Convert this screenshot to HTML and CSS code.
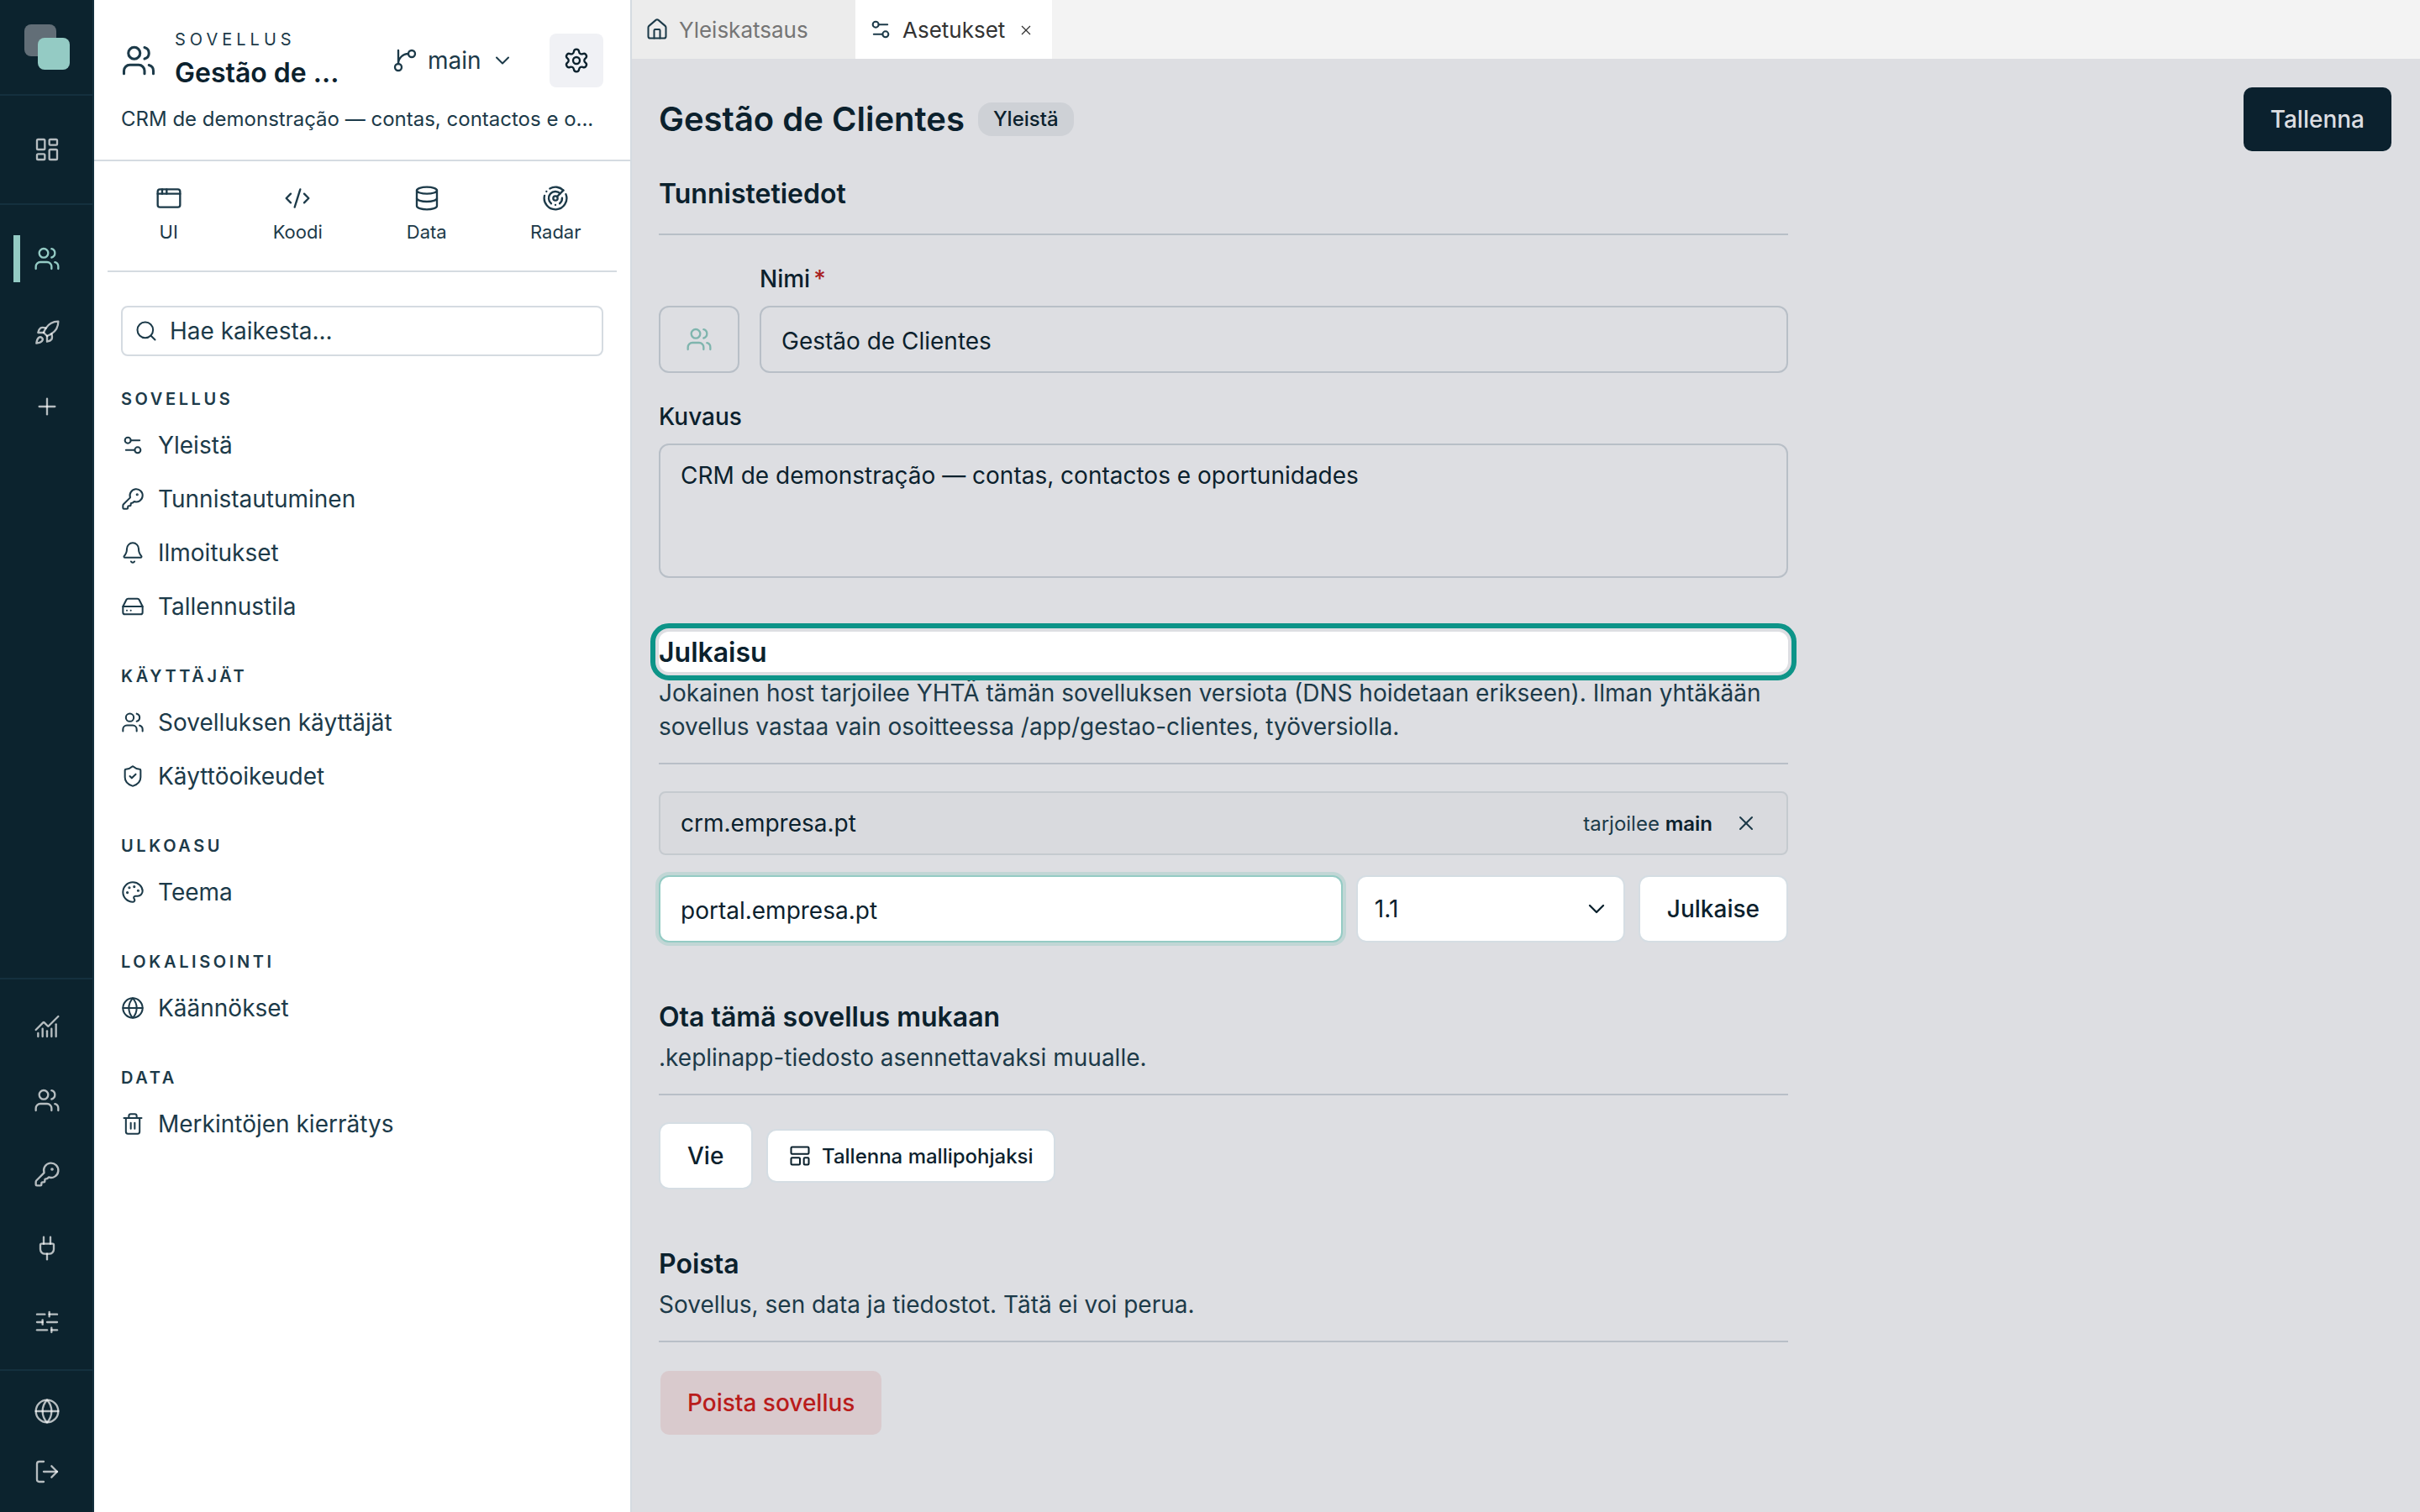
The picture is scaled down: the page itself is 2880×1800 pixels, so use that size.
FILE: index.html
```html
<!DOCTYPE html>
<html lang="fi">
<head>
    <meta charset="UTF-8">
    <meta name="viewport" content="width=device-width, initial-scale=1.0">
    <title>Gestão de Clientes - Asetukset</title>
    <link rel="stylesheet" href="styles.css">
</head>
<body>
    <!-- Icon sprite -->
    <svg class="sprite" xmlns="http://www.w3.org/2000/svg">
        <symbol id="i-dashboard" viewBox="0 0 24 24"><rect x="3" y="3" width="7" height="9" rx="1"/><rect x="14" y="3" width="7" height="5" rx="1"/><rect x="14" y="12" width="7" height="9" rx="1"/><rect x="3" y="16" width="7" height="5" rx="1"/></symbol>
        <symbol id="i-users" viewBox="0 0 24 24"><path d="M16 21v-2a4 4 0 0 0-4-4H6a4 4 0 0 0-4 4v2"/><path d="M16 3.128a4 4 0 0 1 0 7.744"/><path d="M22 21v-2a4 4 0 0 0-3-3.87"/><circle cx="9" cy="7" r="4"/></symbol>
        <symbol id="i-rocket" viewBox="0 0 24 24"><path d="M4.5 16.5c-1.5 1.26-2 5-2 5s3.74-.5 5-2c.71-.84.7-2.13-.09-2.91a2.18 2.18 0 0 0-2.91-.09z"/><path d="m12 15-3-3a22 22 0 0 1 2-3.95A12.88 12.88 0 0 1 22 2c0 2.72-.78 7.5-6 11a22.35 22.35 0 0 1-4 2z"/><path d="M9 12H4s.55-3.03 2-4c1.62-1.08 5 0 5 0"/><path d="M12 15v5s3.03-.55 4-2c1.08-1.62 0-5 0-5"/></symbol>
        <symbol id="i-plus" viewBox="0 0 24 24"><path d="M5 12h14"/><path d="M12 5v14"/></symbol>
        <symbol id="i-chart" viewBox="0 0 24 24"><path d="M12 16v5"/><path d="M16 14v7"/><path d="M20 10v11"/><path d="m22 3-8.646 8.646a.5.5 0 0 1-.708 0L9.354 8.354a.5.5 0 0 0-.707 0L2 15"/><path d="M4 18v3"/><path d="M8 14v7"/></symbol>
        <symbol id="i-key" viewBox="0 0 24 24"><path d="M2.586 17.414A2 2 0 0 0 2 18.828V21a1 1 0 0 0 1 1h3a1 1 0 0 0 1-1v-1a1 1 0 0 1 1-1h1a1 1 0 0 0 1-1v-1a1 1 0 0 1 1-1h.172a2 2 0 0 0 1.414-.586l.814-.814a6.5 6.5 0 1 0-4-4z"/><circle cx="16.5" cy="7.5" r=".5" fill="currentColor"/></symbol>
        <symbol id="i-plug" viewBox="0 0 24 24"><path d="M12 22v-5"/><path d="M15 8V2"/><path d="M17 8a1 1 0 0 1 1 1v4a4 4 0 0 1-4 4h-4a4 4 0 0 1-4-4V9a1 1 0 0 1 1-1z"/><path d="M9 8V2"/></symbol>
        <symbol id="i-sliders" viewBox="0 0 24 24"><path d="M10 5H3"/><path d="M12 19H3"/><path d="M14 3v4"/><path d="M16 17v4"/><path d="M21 12h-9"/><path d="M21 19h-5"/><path d="M21 5h-7"/><path d="M8 10v4"/><path d="M8 12H3"/></symbol>
        <symbol id="i-globe" viewBox="0 0 24 24"><circle cx="12" cy="12" r="10"/><path d="M12 2a14.5 14.5 0 0 0 0 20 14.5 14.5 0 0 0 0-20"/><path d="M2 12h20"/></symbol>
        <symbol id="i-logout" viewBox="0 0 24 24"><path d="m16 17 5-5-5-5"/><path d="M21 12H9"/><path d="M9 21H5a2 2 0 0 1-2-2V5a2 2 0 0 1 2-2h4"/></symbol>
        <symbol id="i-branch" viewBox="0 0 24 24"><path d="M15 6a9 9 0 0 0-9 9V3"/><circle cx="18" cy="6" r="3"/><circle cx="6" cy="18" r="3"/></symbol>
        <symbol id="i-chevron" viewBox="0 0 24 24"><path d="m6 9 6 6 6-6"/></symbol>
        <symbol id="i-gear" viewBox="0 0 24 24"><path d="M9.671 4.136a2.34 2.34 0 0 1 4.659 0 2.34 2.34 0 0 0 3.319 1.915 2.34 2.34 0 0 1 2.33 4.033 2.34 2.34 0 0 0 0 3.831 2.34 2.34 0 0 1-2.33 4.033 2.34 2.34 0 0 0-3.319 1.915 2.34 2.34 0 0 1-4.659 0 2.34 2.34 0 0 0-3.32-1.915 2.34 2.34 0 0 1-2.33-4.033 2.34 2.34 0 0 0 0-3.831A2.34 2.34 0 0 1 6.35 6.051a2.34 2.34 0 0 0 3.319-1.915"/><circle cx="12" cy="12" r="3"/></symbol>
        <symbol id="i-window" viewBox="0 0 24 24"><rect x="2" y="4" width="20" height="16" rx="2"/><path d="M10 4v4"/><path d="M2 8h20"/><path d="M6 4v4"/></symbol>
        <symbol id="i-code" viewBox="0 0 24 24"><path d="m18 16 4-4-4-4"/><path d="m6 8-4 4 4 4"/><path d="m14.5 4-5 16"/></symbol>
        <symbol id="i-database" viewBox="0 0 24 24"><ellipse cx="12" cy="5" rx="9" ry="3"/><path d="M3 5V19A9 3 0 0 0 21 19V5"/><path d="M3 12A9 3 0 0 0 21 12"/></symbol>
        <symbol id="i-radar" viewBox="0 0 24 24"><path d="M19.07 4.93A10 10 0 0 0 6.99 3.34"/><path d="M4 6h.01"/><path d="M2.29 9.62A10 10 0 1 0 21.31 8.35"/><path d="M16.24 7.76A6 6 0 1 0 8.23 16.67"/><path d="M12 18h.01"/><path d="M17.99 11.66A6 6 0 0 1 15.77 16.67"/><circle cx="12" cy="12" r="2"/><path d="m13.41 10.59 5.66-5.66"/></symbol>
        <symbol id="i-search" viewBox="0 0 24 24"><path d="m21 21-4.34-4.34"/><circle cx="11" cy="11" r="8"/></symbol>
        <symbol id="i-settings" viewBox="0 0 24 24"><path d="M14 17H5"/><path d="M19 7h-9"/><circle cx="17" cy="17" r="3"/><circle cx="7" cy="7" r="3"/></symbol>
        <symbol id="i-bell" viewBox="0 0 24 24"><path d="M10.268 21a2 2 0 0 0 3.464 0"/><path d="M3.262 15.326A1 1 0 0 0 4 17h16a1 1 0 0 0 .74-1.673C19.41 13.956 18 12.499 18 8A6 6 0 0 0 6 8c0 4.499-1.411 5.956-2.738 7.326"/></symbol>
        <symbol id="i-drive" viewBox="0 0 24 24"><path d="M22 12H2"/><path d="M5.45 5.11 2 12v6a2 2 0 0 0 2 2h16a2 2 0 0 0 2-2v-6l-3.45-6.89A2 2 0 0 0 16.76 4H7.24a2 2 0 0 0-1.79 1.11z"/><path d="M6 16h.01"/><path d="M10 16h.01"/></symbol>
        <symbol id="i-shield" viewBox="0 0 24 24"><path d="M20 13c0 5-3.5 7.5-7.66 8.95a1 1 0 0 1-.67-.01C7.5 20.5 4 18 4 13V6a1 1 0 0 1 1-1c2 0 4.5-1.2 6.24-2.72a1.17 1.17 0 0 1 1.52 0C14.51 3.81 17 5 19 5a1 1 0 0 1 1 1z"/><path d="m9 12 2 2 4-4"/></symbol>
        <symbol id="i-palette" viewBox="0 0 24 24"><path d="M12 22a1 1 0 0 1 0-20 10 9 0 0 1 10 9 5 5 0 0 1-5 5h-2.25a1.75 1.75 0 0 0-1.4 2.8l.3.4a1.75 1.75 0 0 1-1.4 2.8z"/><circle cx="13.5" cy="6.5" r=".5" fill="currentColor"/><circle cx="17.5" cy="10.5" r=".5" fill="currentColor"/><circle cx="6.5" cy="12.5" r=".5" fill="currentColor"/><circle cx="8.5" cy="7.5" r=".5" fill="currentColor"/></symbol>
        <symbol id="i-trash" viewBox="0 0 24 24"><path d="M10 11v6"/><path d="M14 11v6"/><path d="M19 6v14a2 2 0 0 1-2 2H7a2 2 0 0 1-2-2V6"/><path d="M3 6h18"/><path d="M8 6V4a2 2 0 0 1 2-2h4a2 2 0 0 1 2 2v2"/></symbol>
        <symbol id="i-house" viewBox="0 0 24 24"><path d="M15 21v-8a1 1 0 0 0-1-1h-4a1 1 0 0 0-1 1v8"/><path d="M3 10a2 2 0 0 1 .709-1.528l7-6a2 2 0 0 1 2.582 0l7 6A2 2 0 0 1 21 10v9a2 2 0 0 1-2 2H5a2 2 0 0 1-2-2z"/></symbol>
        <symbol id="i-x" viewBox="0 0 24 24"><path d="M18 6 6 18"/><path d="m6 6 12 12"/></symbol>
        <symbol id="i-template" viewBox="0 0 24 24"><rect x="3" y="3" width="18" height="7" rx="1"/><rect x="3" y="14" width="9" height="7" rx="1"/><rect x="16" y="14" width="5" height="7" rx="1"/></symbol>
    </svg>

    <div class="app">
        <nav class="rail">
            <div class="rail-logo">
                <svg class="logo" viewBox="0 0 54 54"><rect class="logo-back" width="38" height="38" rx="8"/><rect class="logo-front" x="16" y="16" width="38" height="38" rx="8"/></svg>
            </div>
            <div class="rail-group">
                <a class="rail-item"><svg class="icon"><use href="#i-dashboard"/></svg></a>
            </div>
            <div class="rail-group rail-apps">
                <a class="rail-item active"><svg class="icon"><use href="#i-users"/></svg></a>
                <a class="rail-item"><svg class="icon"><use href="#i-rocket"/></svg></a>
                <a class="rail-item"><svg class="icon"><use href="#i-plus"/></svg></a>
            </div>
            <div class="rail-group rail-admin">
                <a class="rail-item"><svg class="icon"><use href="#i-chart"/></svg></a>
                <a class="rail-item"><svg class="icon"><use href="#i-users"/></svg></a>
                <a class="rail-item"><svg class="icon"><use href="#i-key"/></svg></a>
                <a class="rail-item"><svg class="icon"><use href="#i-plug"/></svg></a>
                <a class="rail-item"><svg class="icon"><use href="#i-sliders"/></svg></a>
            </div>
            <div class="rail-group rail-footer">
                <a class="rail-item"><svg class="icon"><use href="#i-globe"/></svg></a>
                <a class="rail-item"><svg class="icon"><use href="#i-logout"/></svg></a>
            </div>
        </nav>

        <aside class="sidebar">
            <header class="app-header">
                <div class="app-row">
                    <svg class="icon icon-lg"><use href="#i-users"/></svg>
                    <div class="app-name">
                        <div class="eyebrow">SOVELLUS</div>
                        <div class="app-title">Gestão de ...</div>
                    </div>
                    <div class="branch">
                        <svg class="icon"><use href="#i-branch"/></svg>
                        <span>main</span>
                        <svg class="icon icon-sm"><use href="#i-chevron"/></svg>
                    </div>
                    <button class="gear"><svg class="icon"><use href="#i-gear"/></svg></button>
                </div>
                <p class="app-desc">CRM de demonstração — contas, contactos e o...</p>
            </header>
            <div class="modes">
                <a class="mode"><svg class="icon"><use href="#i-window"/></svg><span>UI</span></a>
                <a class="mode"><svg class="icon"><use href="#i-code"/></svg><span>Koodi</span></a>
                <a class="mode"><svg class="icon"><use href="#i-database"/></svg><span>Data</span></a>
                <a class="mode"><svg class="icon"><use href="#i-radar"/></svg><span>Radar</span></a>
            </div>
            <div class="menu">
                <div class="search"><svg class="icon icon-sm"><use href="#i-search"/></svg><span>Hae kaikesta...</span></div>
                <section class="menu-group">
                    <h3>SOVELLUS</h3>
                    <a class="menu-item"><svg class="icon icon-sm"><use href="#i-settings"/></svg>Yleistä</a>
                    <a class="menu-item"><svg class="icon icon-sm"><use href="#i-key"/></svg>Tunnistautuminen</a>
                    <a class="menu-item"><svg class="icon icon-sm"><use href="#i-bell"/></svg>Ilmoitukset</a>
                    <a class="menu-item"><svg class="icon icon-sm"><use href="#i-drive"/></svg>Tallennustila</a>
                </section>
                <section class="menu-group">
                    <h3>KÄYTTÄJÄT</h3>
                    <a class="menu-item"><svg class="icon icon-sm"><use href="#i-users"/></svg>Sovelluksen käyttäjät</a>
                    <a class="menu-item"><svg class="icon icon-sm"><use href="#i-shield"/></svg>Käyttöoikeudet</a>
                </section>
                <section class="menu-group">
                    <h3>ULKOASU</h3>
                    <a class="menu-item"><svg class="icon icon-sm"><use href="#i-palette"/></svg>Teema</a>
                </section>
                <section class="menu-group">
                    <h3>LOKALISOINTI</h3>
                    <a class="menu-item"><svg class="icon icon-sm"><use href="#i-globe"/></svg>Käännökset</a>
                </section>
                <section class="menu-group">
                    <h3>DATA</h3>
                    <a class="menu-item"><svg class="icon icon-sm"><use href="#i-trash"/></svg>Merkintöjen kierrätys</a>
                </section>
            </div>
        </aside>

        <main class="main">
            <div class="tabs">
                <div class="tab tab-home"><svg class="icon icon-sm"><use href="#i-house"/></svg><span>Yleiskatsaus</span></div>
                <div class="tab tab-active"><svg class="icon icon-sm"><use href="#i-settings"/></svg><span>Asetukset</span><svg class="icon tab-close"><use href="#i-x"/></svg></div>
            </div>
            <div class="content">
                <div class="page-head">
                    <h1>Gestão de Clientes</h1>
                    <span class="badge">Yleistä</span>
                    <button class="btn btn-primary">Tallenna</button>
                </div>

                <section class="block">
                    <div class="block-head"><h2>Tunnistetiedot</h2></div>
                    <div class="name-row">
                        <div class="icon-picker"><svg class="icon"><use href="#i-users"/></svg></div>
                        <div class="field">
                            <label>Nimi<span class="required">*</span></label>
                            <div class="input">Gestão de Clientes</div>
                        </div>
                    </div>
                    <div class="field">
                        <label>Kuvaus</label>
                        <div class="input textarea">CRM de demonstração — contas, contactos e oportunidades</div>
                    </div>
                </section>

                <section class="block">
                    <div class="block-head">
                        <h2 class="spotlight">Julkaisu</h2>
                        <p>Jokainen host tarjoilee YHTÄ tämän sovelluksen versiota (DNS hoidetaan erikseen). Ilman yhtäkään sovellus vastaa vain osoitteessa /app/gestao-clientes, työversiolla.</p>
                    </div>
                    <div class="host">
                        <span class="host-name">crm.empresa.pt</span>
                        <span class="host-version">tarjoilee <b>main</b></span>
                        <button class="host-remove"><svg class="icon icon-sm"><use href="#i-x"/></svg></button>
                    </div>
                    <div class="publish-row">
                        <div class="input focused">portal.empresa.pt</div>
                        <div class="select"><span>1.1</span><svg class="icon"><use href="#i-chevron"/></svg></div>
                        <button class="btn">Julkaise</button>
                    </div>
                </section>

                <section class="block">
                    <div class="block-head">
                        <h2>Ota tämä sovellus mukaan</h2>
                        <p>.keplinapp-tiedosto asennettavaksi muualle.</p>
                    </div>
                    <div class="actions">
                        <button class="btn">Vie</button>
                        <button class="btn btn-small"><svg class="icon icon-sm"><use href="#i-template"/></svg>Tallenna mallipohjaksi</button>
                    </div>
                </section>

                <section class="block">
                    <div class="block-head">
                        <h2>Poista</h2>
                        <p>Sovellus, sen data ja tiedostot. Tätä ei voi perua.</p>
                    </div>
                    <div class="actions">
                        <button class="btn btn-danger">Poista sovellus</button>
                    </div>
                </section>
            </div>
        </main>
    </div>
</body>
</html>
```
FILE: styles.css
```css
* {
    box-sizing: border-box;
}

body {
    margin: 0;
    font-family: Inter, "Liberation Sans", sans-serif;
    font-size: 28px;
    color: #1c3a49;
    background-color: #dddee2;
}

h1, h2, h3, p {
    margin: 0;
}

button {
    font: inherit;
    color: inherit;
    border: none;
    padding: 0;
    background: none;
}

.sprite {
    display: none;
}

.icon {
    width: 32px;
    height: 32px;
    flex: none;
    fill: none;
    stroke: currentColor;
    stroke-width: 1.75;
    stroke-linecap: round;
    stroke-linejoin: round;
}

.icon-sm {
    width: 28px;
    height: 28px;
}

.icon-lg {
    width: 42px;
    height: 42px;
}

.app {
    display: flex;
    height: 1800px;
    overflow: hidden;
}

/* Rail */
.rail {
    width: 112px;
    flex: none;
    display: flex;
    flex-direction: column;
    background-color: #0c232e;
    box-shadow: inset -2px 0 0 #14303e;
    color: rgba(255, 255, 255, 0.7);
}

.rail-logo {
    height: 112px;
    padding: 29px;
}

.logo {
    display: block;
    width: 54px;
    height: 54px;
}

.logo-back {
    fill: #626e77;
}

.logo-front {
    fill: #94cbc4;
}

.rail-group {
    display: flex;
    flex-direction: column;
    gap: 8px;
    padding: 24px 0;
    border-top: 2px solid #14303e;
}

.rail-apps {
    flex: 1;
}

.rail-admin,
.rail-footer {
    padding: 16px 0;
}

.rail-item {
    position: relative;
    height: 80px;
    display: flex;
    align-items: center;
    justify-content: center;
}

.rail-footer .rail-item {
    height: 64px;
}

.rail-item.active {
    color: #94cbc4;
}

.rail-item.active::before {
    content: "";
    position: absolute;
    left: 16px;
    top: 12px;
    width: 8px;
    height: 56px;
    background-color: #94cbc4;
}

/* Sidebar */
.sidebar {
    width: 640px;
    flex: none;
    background-color: #fff;
    border-right: 2px solid #d5dbe1;
}

.app-header {
    height: 192px;
    padding: 32px 32px 0;
    border-bottom: 2px solid #d5dbe1;
}

.app-row {
    display: flex;
    align-items: center;
    height: 80px;
}

.app-name {
    flex: 1;
    min-width: 0;
    align-self: flex-start;
    margin: 0 24px 0 22px;
}

.eyebrow {
    font-size: 20px;
    line-height: 30px;
    letter-spacing: 5px;
}

.app-title {
    font-size: 32px;
    line-height: 50px;
    font-weight: 600;
    color: #0b212d;
    white-space: nowrap;
}

.branch {
    width: 188px;
    margin-right: 24px;
    padding-left: 24px;
    display: flex;
    align-items: center;
    gap: 11px;
}

.gear {
    width: 64px;
    height: 64px;
    display: flex;
    align-items: center;
    justify-content: center;
    border-radius: 8px;
    background-color: #f0f1f5;
    color: #0b212d;
}

.app-desc {
    margin-top: 12px;
    font-size: 24px;
    line-height: 36px;
    white-space: nowrap;
}

.modes {
    height: 132px;
    margin: 0 16px;
    padding-top: 28px;
    display: grid;
    grid-template-columns: repeat(4, 1fr);
    gap: 8px;
    border-bottom: 2px solid #d5dbe1;
}

.mode {
    display: flex;
    flex-direction: column;
    align-items: center;
    gap: 8px;
    font-size: 22px;
    line-height: 32px;
}

.menu {
    padding: 40px 32px 0;
}

.search {
    height: 60px;
    display: flex;
    align-items: center;
    gap: 14px;
    padding: 0 14px;
    border: 2px solid #d5dbe1;
    border-radius: 8px;
}

.menu-group {
    margin-top: 38px;
}

.menu-group h3 {
    margin-bottom: 11px;
    padding-top: 1px;
    font-size: 20px;
    line-height: 24px;
    font-weight: 600;
    letter-spacing: 3.6px;
}

.menu-item {
    height: 64px;
    display: flex;
    align-items: center;
    gap: 16px;
}

/* Main */
.main {
    flex: 1;
    min-width: 0;
}

.tabs {
    height: 70px;
    display: flex;
    background-color: #f3f3f3;
}

.tab {
    display: flex;
    align-items: center;
    gap: 12px;
    padding: 0 16px;
    font-size: 26px;
}

.tab-home {
    width: 266px;
    background-color: #ececec;
}

.tab-home span {
    color: #757575;
}

.tab-active {
    width: 234px;
    background-color: #fff;
}

.tab-active span {
    color: #333;
}

.tab-close {
    width: 20px;
    height: 20px;
    margin-left: 3px;
    margin-top: 2px;
    stroke-width: 1.4;
    stroke-linecap: butt;
    color: #333;
}

.content {
    padding: 32px;
}

.page-head {
    display: flex;
    align-items: center;
    height: 80px;
    margin-bottom: 24px;
}

h1 {
    padding-bottom: 2px;
    font-size: 40px;
    font-weight: 600;
    color: #0b212d;
}

.badge {
    height: 40px;
    margin-left: 16px;
    padding: 0 18px;
    border-radius: 16px;
    background-color: #ced1d6;
    color: #0b212d;
    font-size: 24px;
    line-height: 40px;
    font-weight: 500;
}

.btn {
    height: 80px;
    min-width: 112px;
    display: flex;
    align-items: center;
    padding: 0 32px;
    border: 2px solid #d5dde3;
    border-radius: 12px;
    background-color: #fff;
    color: #0b212d;
    font-weight: 500;
}

.btn-primary {
    margin-left: auto;
    border-color: transparent;
    background-color: #0b212e;
    background-clip: padding-box;
    color: #dddee2;
}

.btn-small {
    height: 64px;
    gap: 12px;
    padding: 0 24px;
    font-size: 24px;
}

.btn-danger {
    border-color: transparent;
    background-color: #d9cacd;
    background-clip: padding-box;
    color: #b91c1c;
}

.block {
    width: 1344px;
    margin-bottom: 64px;
}

.block-head {
    margin-bottom: 32px;
    padding-bottom: 24px;
    border-bottom: 2px solid #b8bfc7;
}

h2 {
    padding-top: 2px;
    font-size: 32px;
    line-height: 46px;
    font-weight: 600;
    color: #0b212d;
}

.block-head p {
    margin-top: 5px;
    margin-bottom: -1px;
    line-height: 40px;
}

/* Highlighted heading */
.spotlight {
    border-radius: 12px;
    background-color: #fff;
    outline: 6px solid #0d9488;
    outline-offset: 4px;
}

.name-row {
    display: flex;
    align-items: flex-end;
    gap: 24px;
    margin-bottom: 32px;
}

.icon-picker {
    width: 96px;
    height: 80px;
    display: flex;
    align-items: center;
    justify-content: center;
    border: 2px solid #b8bfc7;
    border-radius: 12px;
    color: #7fb5ae;
}

.field {
    flex: 1;
}

.field label {
    display: block;
    margin-bottom: 12px;
    line-height: 40px;
    font-weight: 500;
    color: #0b212d;
}

.required {
    margin-left: 4px;
    color: #a8201f;
}

.input {
    height: 80px;
    padding: 2px 24px 0;
    border: 2px solid #b8bfc7;
    border-radius: 12px;
    line-height: 77px;
    color: #0b212d;
}

.textarea {
    height: 160px;
    padding: 15px 24px;
    line-height: 42px;
}

.host {
    height: 76px;
    display: flex;
    align-items: center;
    margin-bottom: 24px;
    padding: 0 24px;
    border: 2px solid #c5cacf;
    border-radius: 8px;
    background-color: #d9dade;
}

.host-name {
    flex: 1;
    color: #0b212d;
}

.host-version {
    font-size: 24px;
}

.host-version b {
    font-weight: 600;
    color: #0b212d;
}

.host-remove {
    width: 48px;
    height: 48px;
    margin-left: 16px;
    display: flex;
    align-items: center;
    justify-content: center;
}

.publish-row {
    display: flex;
    gap: 16px;
}

.focused {
    flex: 1;
    border-color: #94cbc4;
    background-color: #fff;
    box-shadow: 0 0 0 4px #c1d6d5;
}

.select {
    width: 320px;
    height: 80px;
    display: flex;
    align-items: center;
    justify-content: space-between;
    padding: 0 16px 0 20px;
    border: 2px solid #d5dde3;
    border-radius: 12px;
    background-color: #fff;
    color: #0b212d;
}

.actions {
    display: flex;
    align-items: center;
    gap: 16px;
}
```
